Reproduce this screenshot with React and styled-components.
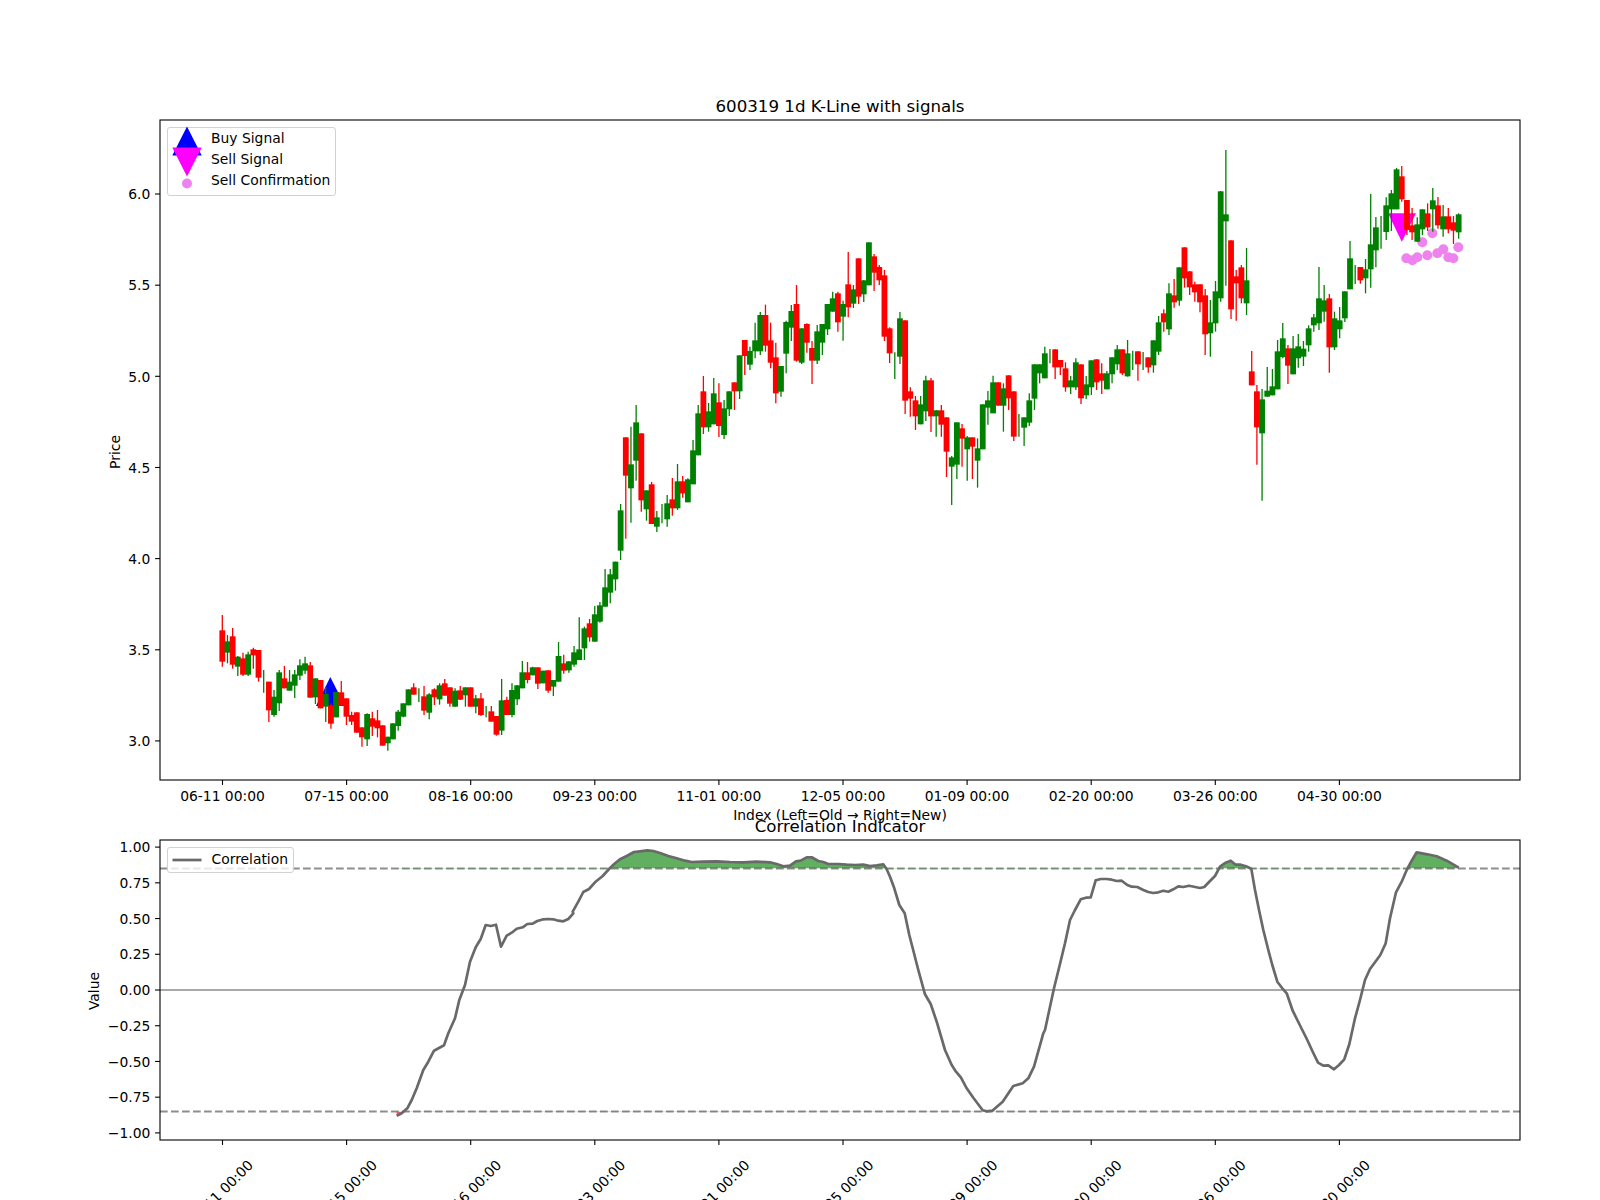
import React from 'react';
import styled, { createGlobalStyle } from 'styled-components';

const GlobalStyle = createGlobalStyle`
  html, body {
    margin: 0;
    padding: 0;
    background: #ffffff;
  }
  body {
    font-family: "DejaVu Sans", "Liberation Sans", sans-serif;
    color: #000000;
  }
`;

const Figure = styled.div`
  width: 1600px;
  height: 1200px;
  overflow: hidden;
  padding-top: 96px;
  box-sizing: border-box;
  background: #ffffff;
`;

const Panel = styled.section`
  position: relative;
  margin-top: ${props => props.$gap}px;
`;

const PanelTitle = styled.h2`
  margin: 0;
  height: 24px;
  padding: 1px 80px 0 160px;
  box-sizing: border-box;
  font-size: 16.67px;
  font-weight: 400;
  line-height: 20px;
  text-align: center;
  position: relative;
  z-index: 1;
`;

const Plot = styled.svg`
  display: block;
  overflow: visible;
`;

const AxisText = styled.text`
  font-family: "DejaVu Sans", "Liberation Sans", sans-serif;
  font-size: 13.89px;
  fill: #000000;
  text-anchor: ${props => props.$anchor || 'middle'};
`;

const Legend = styled.div`
  position: absolute;
  left: 167px;
  top: ${props => props.$top}px;
  box-sizing: border-box;
  padding: ${props => props.$padding};
  display: flex;
  flex-direction: column;
  background: rgba(255, 255, 255, 0.8);
  border: 1px solid #d2d2d2;
  border-radius: 3px;
  z-index: 2;
`;

const LegendRow = styled.div`
  display: flex;
  align-items: center;
  height: ${props => props.$height}px;
  font-size: 13.89px;
  white-space: nowrap;
`;

const LegendKey = styled.svg`
  flex: none;
  width: 30px;
  height: 20px;
  margin-right: 9.5px;
  overflow: visible;
`;

const LegendLabel = styled.span`
  position: relative;
  top: ${props => props.$lift}px;
`;

const UP_RED = '#ff0000';
const DOWN_GREEN = '#008000';

// candle rows: [colour, wick top, body top, body bottom, wick bottom], y in thirds of a px below `top`
const candleSegments = [
  { top: 600, rows: [
    ['r',45,91,185,200],['g',105,124,158,190],['r',84,109,194,206],['g',168,170,200,228],['r',158,175,224,228],
    ['g',155,163,224,228],['r',143,148,166,206],['r',150,150,233,245],['g',210,210,210,278],['r',245,245,331,366],
    ['g',270,290,345,350],['g',210,217,310,333],['r',198,235,265,265],['g',210,245,272,272],['g',210,223,257,294],
    ['g',178,196,227,240],['g',170,190,212,222],['r',186,196,293,293],['g',235,235,292,312],['r',240,240,325,325],
    ['g',260,282,320,366],['r',310,316,371,386],['g',276,276,352,352],['r',243,277,317,317],['r',295,295,350,375],
    ['r',335,345,365,375],['r',337,337,398,398],['r',382,382,412,440],['g',340,342,418,438],['r',335,355,380,408],
    ['r',330,361,385,412],['r',376,376,437,437],['g',410,410,430,452],['g',370,370,418,418],['g',330,335,378,392],
    ['g',310,310,350,352],['g',268,268,316,316],['r',250,262,284,284],['g',265,265,265,306],['r',258,289,332,345],
    ['g',280,283,338,358],['r',265,268,292,315],['g',250,256,298,314],['r',237,250,287,287],['r',262,262,311,320],
    ['g',265,272,320,320],['r',258,271,299,300],['g',262,262,286,320],['r',262,262,320,320],['g',285,295,320,340],
    ['r',279,295,345,348],['g',318,318,318,352],['r',318,334,365,365],['r',348,348,404,407],['g',237,301,392,405],
    ['r',290,300,345,345],['g',250,270,345,352],
  ] },
  { top: 620, rows: [
    ['g',195,196,238,255],['g',123,157,205,205],['r',126,157,180,190],['g',140,142,166,166],['r',142,142,191,207],
    ['g',152,152,190,190],['r',151,151,212,218],['g',180,180,200,228],['g',66,108,185,185],['r',104,130,152,161],
    ['g',123,124,151,158],['g',78,97,134,140],
  ] },
  { top: 380, rows: [
    ['g',712,808,840,840],['g',740,745,805,840],['r',717,730,772,785],['g',678,703,785,785],['g',666,676,725,728],
    ['g',567,622,680,680],['g',567,583,638,670],['g',545,545,598,632],['g',372,391,512,540],['r',172,172,287,476],
    ['g',140,253,325,428],['g',75,127,242,302],['r',160,160,361,395],['g',331,331,388,422],['r',306,313,432,432],
    ['g',393,412,440,456],['g',372,372,372,430],['g',345,370,418,440],['r',294,358,385,407],['g',252,304,385,390],
    ['r',288,304,340,353],['g',295,298,367,367],['g',180,211,313,313],['g',75,100,226,226],['r',-12,34,142,162],
    ['g',69,94,142,155],['g',-6,40,133,133],['r',10,67,138,171],['g',60,85,165,177],['g',34,34,88,108],
    ['r',7,7,34,90],['g',-74,-74,34,57],
  ] },
  { top: 230, rows: [
    ['r',330,330,378,435],['g',350,363,404,420],['g',278,331,364,385],['g',246,255,364,375],['r',224,255,347,365],
    ['r',278,331,398,415],['r',338,382,490,520],['g',408,408,485,500],['g',272,276,371,430],['g',225,243,293,333],
    ['r',165,222,392,395],['g',295,295,398,402],['r',280,282,338,368],['r',333,354,392,462],['g',285,304,392,402],
    ['g',282,282,338,375],['g',222,222,298,315],['g',185,205,245,245],['r',185,190,277,305],['g',212,222,260,332],
    ['r',66,163,232,262],['g',165,178,221,234],['r',85,85,200,222],['g',150,151,193,216],['g',37,37,166,166],
    ['r',72,79,128,183],['r',105,111,151,165],['r',120,136,320,333],['r',292,295,370,399],['g',367,367,367,447],
    ['g',246,265,380,402],['r',271,271,512,552],['r',472,484,506,560],['r',498,511,559,600],['g',498,523,583,583],
    ['g',437,451,544,573],['r',444,451,559,606],['g',540,541,559,620],['r',525,541,584,620],['r',562,562,665,741],
    ['g',678,682,710,825],['g',577,577,704,747],['r',582,595,626,710],['g',618,622,658,752],['r',622,622,650,747],
    ['g',625,655,692,773],['g',523,523,658,658],['g',483,511,533,584],['g',437,457,550,550],['r',457,457,527,527],
    ['g',460,475,527,605],['r',436,436,505,540],['r',484,484,620,633],['g',552,552,552,620],['g',562,562,593,648],
    ['g',490,511,578,588],['g',403,403,506,540],['g',403,403,430,460],['g',350,370,445,445],['g',357,357,357,400],
    ['r',358,358,412,447],
  ] },
  { top: 130, rows: [
    ['r',690,690,712,735],['r',697,715,772,785],['g',738,751,772,792],['g',685,697,772,780],['r',703,703,805,822],
    ['g',738,763,796,807],['g',691,691,772,795],['r',688,688,757,780],['r',700,730,752,792],['g',723,730,778,778],
    ['g',682,682,733,760],['g',645,658,703,720],['r',658,658,730,735],['g',630,670,739,740],['g',662,662,662,720],
    ['r',664,664,703,752],['g',666,666,666,720],['r',682,682,712,728],['g',631,631,706,728],['g',558,577,665,675],
    ['r',538,550,577,605],['g',460,490,598,615],['r',447,496,517,533],['g',412,412,512,527],['r',352,352,445,473],
    ['r',424,424,472,495],['r',455,463,487,515],['r',463,463,517,547],['r',477,496,613,675],['g',510,577,610,680],
    ['g',453,484,580,605],['g',183,184,505,515],['g',60,253,274,467],['r',331,331,538,567],['r',420,439,460,572],
    ['r',405,412,505,520],['g',354,451,520,555],['r',663,724,766,766],['r',765,784,892,1004],['g',777,808,910,1112],
    ['g',711,782,800,800],['g',717,769,796,796],['g',630,664,778,778],['g',579,625,681,685],['r',645,655,707,762],
    ['g',618,655,733,733],['g',612,649,685,713],['g',633,656,680,708],['g',586,595,646,665],['g',552,562,586,605],
    ['g',411,505,580,600],['g',465,511,545,575],['r',492,505,652,728],['g',545,565,652,660],['g',531,571,598,625],
    ['g',484,484,565,576],['g',333,385,478,478],['g',405,405,405,462],['r',411,411,451,461],['g',387,418,445,490],
    ['g',192,343,418,473],['g',261,292,361,412],['g',258,258,258,356],['g',202,226,306,330],['g',180,190,238,303],
    ['g',114,118,238,238],['r',108,139,208,215],['r',210,210,300,315],['r',234,286,307,330],['g',262,283,335,335],
    ['g',238,238,298,315],['r',220,250,292,303],['g',174,211,238,305],['r',201,226,286,296],['g',225,259,298,320],
    ['r',234,259,298,310],['r',258,277,302,342],['g',250,253,307,326],
  ] },
];

const CANDLE_X0 = 222.3;
const CANDLE_STEP = 5.173;

const candles = candleSegments
  .flatMap(seg =>
    seg.rows.map(([colour, wickTop, bodyTop, bodyBottom, wickBottom]) => ({
      colour: colour === 'r' ? UP_RED : DOWN_GREEN,
      wickTop: seg.top + wickTop / 3,
      bodyTop: seg.top + bodyTop / 3,
      bodyBottom: seg.top + bodyBottom / 3,
      wickBottom: seg.top + wickBottom / 3,
    }))
  )
  .map((c, i) => ({ ...c, x: CANDLE_X0 + CANDLE_STEP * i }));

const confirmations = [
  [499,385],[517,391],[532,382],[547,337],[562,376],[577,310],[592,370],[610,358],[625,382],[640,385],[655,352],
].map(([x, y]) => [1240 + x / 3, 130 + y / 3]);

const tickDates = ['06-11', '07-15', '08-16', '09-23', '11-01', '12-05', '01-09', '02-20', '03-26', '04-30'];
const tickX = i => 222.5 + 124.1 * i;

const priceTicks = [
  ['6.0', 194], ['5.5', 285.2], ['5.0', 376.3], ['4.5', 467.5], ['4.0', 558.6], ['3.5', 649.8], ['3.0', 740.9],
];

const valueTicks = [
  ['1.00', 1], ['0.75', 0.75], ['0.50', 0.5], ['0.25', 0.25], ['0.00', 0],
  ['\u22120.25', -0.25], ['\u22120.50', -0.5], ['\u22120.75', -0.75], ['\u22121.00', -1],
];
const valueY = v => 990 - 142.9 * v;
const UPPER_Y = valueY(0.85);
const LOWER_Y = valueY(-0.85);

const pageFrom = (left, top, pts) => pts.map(([x, y]) => [left + x / 3, top + y / 3]);

const correlation = [
  ...pageFrom(80, 770, [
    [950,1037],[965,1030],[982,1015],[995,990],[1010,955],[1030,900],[1045,875],[1062,842],[1092,826],[1105,790],
    [1125,745],[1138,690],[1155,645],[1170,575],[1187,532],[1202,507],[1217,465],[1232,468],[1248,464],[1263,530],
    [1280,497],[1295,488],[1310,476],[1328,472],[1342,462],[1358,461],[1372,453],[1390,448],[1405,447],[1420,448],
    [1435,452],[1450,454],[1465,447],[1480,430],
  ]),
  ...pageFrom(560, 800, [
    [38,335],[55,305],[70,276],[87,267],[105,247],[128,228],[150,204],[165,190],[180,178],[200,168],[222,156],
    [240,154],[262,151],[280,153],[300,159],[325,168],[350,175],[375,182],[395,186],[430,185],[470,184],[510,186],
    [550,187],[590,185],[630,187],[650,192],[670,199],[690,197],[708,184],[722,182],[740,172],[755,172],[775,183],
    [790,186],[805,192],[835,192],[860,194],[885,195],[910,194],[930,198],[950,196],[970,193],[980,208],[990,230],
    [1003,265],[1018,315],[1034,340],[1048,405],[1075,510],[1095,583],[1112,612],[1130,665],[1155,750],[1175,795],
    [1188,815],[1203,833],[1220,865],[1240,893],[1268,931],[1280,934],[1297,932],[1328,905],[1360,858],[1388,850],
    [1405,835],[1422,800],[1450,700],
  ]),
  ...pageFrom(1040, 830, [
    [15,600],[28,540],[42,475],[58,410],[75,340],[90,270],[105,240],[122,208],[138,203],[152,202],[167,151],[183,147],
    [200,147],[215,149],[230,153],[245,152],[262,165],[275,170],[292,171],[310,180],[325,186],[340,189],[355,187],
    [370,182],[385,185],[400,178],[415,169],[430,171],[447,167],[462,170],[480,174],[493,171],[510,153],[525,138],
    [540,110],[555,99],[572,92],[587,104],[602,104],[618,109],[634,116],[645,180],[657,240],[670,300],[685,360],
    [697,405],[712,455],[727,475],[740,490],[758,542],[772,570],[787,600],[802,630],[818,665],[834,698],[850,707],
    [865,706],[882,718],[897,705],[913,688],[928,643],[945,565],[960,510],[975,450],[990,417],[1005,397],[1021,375],
    [1037,340],[1050,265],[1068,187],[1085,155],[1100,120],[1115,92],[1130,67],[1162,73],[1190,79],[1220,92],[1256,113],
  ]),
];

const toPoints = pts => pts.map(([x, y]) => `${x.toFixed(1)},${y.toFixed(1)}`).join(' ');
const linePoints = toPoints(correlation);
const startX = correlation[0][0];
const endX = correlation[correlation.length - 1][0];

function Candle({ candle }) {
  const { x, colour, wickTop, wickBottom, bodyTop, bodyBottom } = candle;
  return (
    <g>
      <line x1={x} x2={x} y1={wickTop} y2={wickBottom} stroke={colour} strokeWidth="1.3" />
      {bodyBottom > bodyTop && (
        <rect x={x - 2.9} y={bodyTop} width="5.8" height={bodyBottom - bodyTop} fill={colour} />
      )}
    </g>
  );
}

function XTicks({ y }) {
  return tickDates.map((_, i) => (
    <line key={i} x1={tickX(i)} x2={tickX(i)} y1={y} y2={y + 4.9} stroke="#000" strokeWidth="1.1" />
  ));
}

function YTick({ label, y }) {
  return (
    <g>
      <line x1="155.1" x2="160" y1={y} y2={y} stroke="#000" strokeWidth="1.1" />
      <AxisText x="150.3" y={y + 5.2} $anchor="end">{label}</AxisText>
    </g>
  );
}

function PriceChart() {
  return (
    <Plot width="1600" height="660" viewBox="0 120 1600 660">
      <polygon points="330.3,677 316,706 345,706" fill="#0000ff" />
      <polygon points="1388,213.3 1416,213.3 1401.8,241.7" fill="#ff00ff" />
      {confirmations.map(([cx, cy], i) => (
        <circle key={i} cx={cx} cy={cy} r="5" fill="#ee82ee" />
      ))}
      {candles.map((c, i) => <Candle key={i} candle={c} />)}
      <rect x="160" y="120" width="1360" height="660" fill="none" stroke="#000" strokeWidth="1.1" />
      <XTicks y={780} />
      {tickDates.map((date, i) => (
        <AxisText key={date} x={tickX(i)} y="800.6">{`${date} 00:00`}</AxisText>
      ))}
      {priceTicks.map(([label, y]) => <YTick key={label} label={label} y={y} />)}
      <AxisText x="840" y="820">Index (Left=Old → Right=New)</AxisText>
      <AxisText transform="translate(120 452) rotate(-90)">Price</AxisText>
    </Plot>
  );
}

function CorrelationChart() {
  return (
    <Plot width="1600" height="360" viewBox="0 840 1600 360">
      <defs>
        <clipPath id="above-upper">
          <rect x="160" y="840" width="1360" height={UPPER_Y - 840} />
        </clipPath>
        <clipPath id="below-lower">
          <rect x="160" y={LOWER_Y} width="1360" height={1140 - LOWER_Y} />
        </clipPath>
      </defs>
      <line x1="160" x2="1520" y1="990" y2="990" stroke="#a9a9a9" strokeWidth="1.8" />
      <line x1="160" x2="1520" y1={UPPER_Y} y2={UPPER_Y} stroke="#8e8e8e" strokeWidth="2" strokeDasharray="7.7 3.3" />
      <line x1="160" x2="1520" y1={LOWER_Y} y2={LOWER_Y} stroke="#8e8e8e" strokeWidth="2" strokeDasharray="7.7 3.3" />
      <polygon
        points={`${linePoints} ${endX},${UPPER_Y} ${startX},${UPPER_Y}`}
        fill="#008000"
        fillOpacity="0.62"
        clipPath="url(#above-upper)"
      />
      <polygon
        points={`${linePoints} ${endX},${LOWER_Y} ${startX},${LOWER_Y}`}
        fill="#ff0000"
        fillOpacity="0.6"
        clipPath="url(#below-lower)"
      />
      <polyline points={linePoints} fill="none" stroke="#696969" strokeWidth="2.7" strokeLinejoin="round" />
      <rect x="160" y="840" width="1360" height="300" fill="none" stroke="#000" strokeWidth="1.1" />
      <XTicks y={1140} />
      {tickDates.map((date, i) => (
        <AxisText
          key={date}
          dominantBaseline="central"
          transform={`translate(${tickX(i) - 2} 1192.5) rotate(-45)`}
        >
          {`${date} 00:00`}
        </AxisText>
      ))}
      {valueTicks.map(([label, v]) => <YTick key={label} label={label} y={valueY(v)} />)}
      <AxisText transform="translate(99 991) rotate(-90)">Value</AxisText>
    </Plot>
  );
}

function SignalLegend() {
  return (
    <Legend $top={31.3} $padding="2.5px 5px 2.5px 3.5px">
      <LegendRow $height={20.7}>
        <LegendKey viewBox="-15 -10 30 20">
          <polygon points="0,-14.5 14.7,14.5 -14.7,14.5" fill="#0000ff" />
        </LegendKey>
        <LegendLabel $lift={-3}>Buy Signal</LegendLabel>
      </LegendRow>
      <LegendRow $height={20.7}>
        <LegendKey viewBox="-15 -10 30 20">
          <polygon points="-14.7,-14.5 14.7,-14.5 0,14.5" fill="#ff00ff" />
        </LegendKey>
        <LegendLabel $lift={-3}>Sell Signal</LegendLabel>
      </LegendRow>
      <LegendRow $height={20.7}>
        <LegendKey viewBox="-15 -10 30 20">
          <circle cx="0" cy="0.5" r="5" fill="#ee82ee" />
        </LegendKey>
        <LegendLabel $lift={-3}>Sell Confirmation</LegendLabel>
      </LegendRow>
    </Legend>
  );
}

function CorrelationLegend() {
  return (
    <Legend $top={31.3} $padding="1.5px 5px 1.5px 4px">
      <LegendRow $height={20.7}>
        <LegendKey viewBox="0 0 30 20">
          <line x1="0.5" x2="29.5" y1="10" y2="10" stroke="#696969" strokeWidth="2.7" />
        </LegendKey>
        <LegendLabel $lift={-1}>Correlation</LegendLabel>
      </LegendRow>
    </Legend>
  );
}

export default function App() {
  return (
    <>
      <GlobalStyle />
      <Figure>
        <Panel $gap={0}>
          <PanelTitle>600319 1d K-Line with signals</PanelTitle>
          <PriceChart />
          <SignalLegend />
        </Panel>
        <Panel $gap={36}>
          <PanelTitle>Correlation Indicator</PanelTitle>
          <CorrelationChart />
          <CorrelationLegend />
        </Panel>
      </Figure>
    </>
  );
}
